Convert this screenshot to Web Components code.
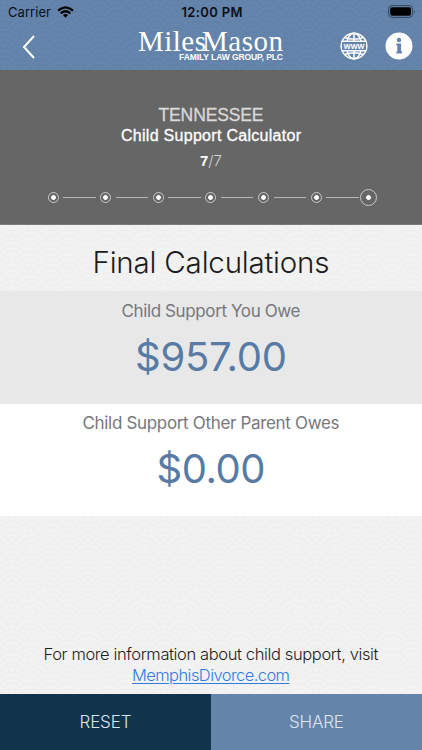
<!DOCTYPE html>
<html lang="en">
<head>
<meta charset="utf-8">
<meta name="viewport" content="width=device-width, initial-scale=1">
<title>Child Support Calculator</title>
<style>
  body {
    margin: 0;
    font-family: Inter, "Liberation Sans", sans-serif;
  }
</style>
</head>
<body>
<calculator-app></calculator-app>

<script>
// seigaiha waves: rows of concentric circles, each row covers the lower half of the previous one
function waves(base, line) {
  let circles = '';
  for (let row = -1; row < 4; row++) {
    const xs = row % 2 ? [19] : [0, 38];
    for (const x of xs) {
      for (const [r, fill] of [[20, line], [18, base], [15, line], [12.5, base], [10, line], [7.5, base], [5, line], [2.5, base]]) {
        circles += `<circle cx="${x}" cy="${row * 10.8}" r="${r}" fill="${fill}"/>`;
      }
    }
  }
  const svg = `<svg xmlns="http://www.w3.org/2000/svg" width="38" height="21.6" viewBox="0 0 38 21.6">${circles}</svg>`;
  return `url('data:image/svg+xml,${encodeURIComponent(svg)}')`;
}

// One line of text, tracked in or out to the given width
customElements.define("fit-text", class extends HTMLElement {
  constructor() {
    super();
    this.attachShadow({ mode: "open" }).innerHTML = `
      <style>
        :host { display: block; white-space: nowrap; }
        span {
          display: inline-block;
          text-decoration: var(--line, none);
          text-decoration-thickness: 1px;
          text-underline-offset: 2px;
        }
      </style>
      <span><slot></slot></span>
    `;
  }

  connectedCallback() {
    const span = this.shadowRoot.querySelector("span");
    const count = this.textContent.length - 1;
    const gap = (this.getAttribute("width") - span.getBoundingClientRect().width) / count;
    span.style.letterSpacing = `${gap}px`;
    span.style.marginRight = `${-gap}px`;
  }
});

customElements.define("status-bar", class extends HTMLElement {
  constructor() {
    super();
    this.attachShadow({ mode: "open" }).innerHTML = `
      <style>
        :host {
          display: grid;
          grid-template-columns: 1fr auto 1fr;
          align-items: center;
          height: 24px;
          padding: 0 6px 0 8px;
          font-size: 13px;
          color: #0b0f15;
        }
        .carrier { display: flex; align-items: center; gap: 6px; }
        .time { font-weight: 600; }
        .battery { justify-self: end; display: block; margin-top: -1px; }
        svg { display: block; }
      </style>
      <div class="carrier">
        <fit-text width="43">Carrier</fit-text>
        <svg width="17" height="12" viewBox="0 0 17 12" fill="none" stroke="#000" stroke-width="2.2">
          <path d="M1 4.600Q8.500-1.900 16 4.600M3.700 7.300Q8.500 3.200 13.300 7.300"/>
          <path d="M6 9Q8.500 7 11 9L8.500 11.700Z" fill="#000" stroke="none"/>
        </svg>
      </div>
      <fit-text class="time" width="61">12:00 PM</fit-text>
      <svg class="battery" width="28" height="13" viewBox="0 0 28 13">
        <rect x=".6" y=".6" width="24" height="11.800" rx="3.500" fill="none" stroke="#32465f"/>
        <rect x="2.200" y="2.200" width="20.800" height="8.600" rx="2" fill="#000"/>
        <path d="M26 4.500q1.500 2 0 4z" fill="#32465f"/>
      </svg>
    `;
  }
});

customElements.define("nav-bar", class extends HTMLElement {
  constructor() {
    super();
    this.attachShadow({ mode: "open" }).innerHTML = `
      <style>
        :host {
          display: grid;
          grid-template-columns: 116px 145px 1fr;
          align-items: start;
          height: 46px;
          box-sizing: border-box;
          padding: 8px 9px 0 22px;
          color: #fff;
        }
        svg { display: block; }
        .back { margin-top: 3px; }
        .logo { margin-top: -5px; }
        .name {
          font: 29px/29px "Liberation Serif", serif;
          display: flex;
        }
        .name .last { margin-left: -4px; }
        .firm {
          font: bold 8.500px/10px "Liberation Sans", sans-serif;
          display: flex;
          justify-content: flex-end;
          margin-top: -4px;
        }
        .icons { display: flex; justify-content: flex-end; gap: 17px; }
      </style>
      <svg class="back" width="14" height="24" viewBox="0 0 14 24" fill="none" stroke="#fff" stroke-width="2">
        <path d="M12 1 2 12l10 11"/>
      </svg>
      <div class="logo">
        <div class="name">
          <fit-text width="68">Miles</fit-text>
          <fit-text class="last" width="81">Mason</fit-text>
        </div>
        <div class="firm"><fit-text width="104">FAMILY LAW GROUP, PLC</fit-text></div>
      </div>
      <div class="icons">
        <svg width="28" height="28" viewBox="0 0 28 28" fill="none" stroke="#fff" stroke-width="1.500">
          <circle cx="14" cy="14" r="12.800" fill="#6484ac"/>
          <ellipse cx="14" cy="14" rx="7.500" ry="12.800"/>
          <path d="M14 1v26M4.500 5.500Q14 9 23.500 5.500M4.500 22.500Q14 19 23.500 22.500"/>
          <rect x="2.200" y="9.500" width="23.600" height="9" fill="#6484ac" stroke="none"/>
          <path d="M2 9.300h24M2 18.700h24"/>
          <text x="3.800" y="16.500" font-family="Liberation Sans" font-size="9" font-weight="bold" textLength="20.500" lengthAdjust="spacingAndGlyphs" fill="#fff" stroke="none">www</text>
        </svg>
        <svg width="28" height="28" viewBox="0 0 28 28">
          <circle cx="14" cy="14" r="13.500" fill="#fff"/>
          <circle cx="14" cy="8" r="2.200" fill="#6484ac"/>
          <path d="M11.400 11.500h4.700v8h1v2h-5.700v-2h.9v-6h-.9z" fill="#6484ac"/>
        </svg>
      </div>
    `;
  }
});

customElements.define("step-dots", class extends HTMLElement {
  connectedCallback() {
    const total = Number(this.getAttribute("total"));
    const current = Number(this.getAttribute("current"));
    let steps = '';
    for (let i = 1; i <= total; i++) {
      steps += `<div class="step${i === current ? ' current' : ''}"><i></i></div>`;
    }
    this.attachShadow({ mode: "open" }).innerHTML = `
      <style>
        :host {
          display: flex;
          margin-left: 47.500px;
          height: 17px;
        }
        .step {
          display: flex;
          align-items: center;
          gap: 4.500px;
          width: 52.670px;
        }
        i {
          flex: none;
          box-sizing: border-box;
          width: 11px;
          height: 11px;
          border: 1px solid #c9c9c9;
          border-radius: 50%;
          background: radial-gradient(circle, #fff 2px, transparent 2.800px);
        }
        .current i { width: 17px; height: 17px; margin-left: -3px; }
        .step:not(:last-child)::after {
          content: "";
          width: 32.500px;
          height: 1px;
          background: #b5b5b5;
        }
      </style>
      ${steps}
    `;
  }
});

customElements.define("calculator-header", class extends HTMLElement {
  constructor() {
    super();
    this.attachShadow({ mode: "open" }).innerHTML = `
      <style>
        :host {
          display: block;
          height: 155px;
          box-sizing: border-box;
          padding-top: 34px;
          background: #666;
          border-bottom: 1px solid #7b7b7b;
          color: #fff;
          font-family: "Liberation Sans", sans-serif;
        }
        .line { display: flex; justify-content: center; }
        .state { font-size: 17.500px; line-height: 22px; color: #d9d9d9; -webkit-text-stroke: .3px #d9d9d9; }
        .title { font-size: 16px; line-height: 20px; -webkit-text-stroke: .3px #fff; }
        .count { font-size: 15px; line-height: 18px; margin: 6px 0 19px; }
        .count span { color: #d4d4d4; font-family: Inter, sans-serif; font-weight: 300; }
      </style>
      <div class="line state"><fit-text width="105">TENNESSEE</fit-text></div>
      <div class="line title"><fit-text width="180">Child Support Calculator</fit-text></div>
      <div class="line count"><b>7</b><span>/7</span></div>
      <step-dots total="7" current="7"></step-dots>
    `;
  }
});

customElements.define("result-row", class extends HTMLElement {
  constructor() {
    super();
    this.attachShadow({ mode: "open" }).innerHTML = `
      <style>
        :host {
          display: flex;
          flex-direction: column;
          align-items: center;
          height: 112.500px;
          box-sizing: border-box;
          padding-top: 7.500px;
          background: var(--row-background, #fff);
        }
        .label { font-size: 17px; line-height: 24px; color: #77777c; }
        .amount { font-size: 40px; line-height: 50px; margin-top: 9px; color: #587ba5; }
      </style>
      <div class="label"><slot name="label"></slot></div>
      <div class="amount"><slot name="amount"></slot></div>
    `;
  }
});

customElements.define("action-button", class extends HTMLElement {
  constructor() {
    super();
    this.attachShadow({ mode: "open" }).innerHTML = `
      <style>
        :host {
          display: flex;
          flex: 1;
          align-items: center;
          justify-content: center;
          font-size: 17px;
          font-weight: 300;
          color: #dde4ee;
        }
      </style>
      <slot></slot>
    `;
  }
});

customElements.define("calculator-app", class extends HTMLElement {
  constructor() {
    super();
    this.attachShadow({ mode: "open" }).innerHTML = `
      <style>
        :host {
          display: flex;
          flex-direction: column;
          height: 750px;
          background: ${waves('#f3f3f3', '#f0f0f0')} 12px 1px #f2f2f2;
        }
        .top { background: ${waves('#6585ad', '#6282a9')} 4px 3px #6484ac; }
        h1 {
          display: flex;
          justify-content: center;
          align-items: center;
          height: 66px;
          margin: 0;
          padding-top: 7px;
          box-sizing: border-box;
          font-size: 29.500px;
          font-weight: 300;
          color: #1c1c1c;
        }
        .owe { --row-background: #e8e8e8; }
        .info {
          flex: 1;
          display: flex;
          flex-direction: column;
          align-items: center;
          justify-content: flex-end;
          padding-bottom: 9px;
          font-size: 16.500px;
          font-weight: 300;
          line-height: 20.500px;
          color: #1c1c1c;
        }
        a { color: #2f7de1; --line: underline; }
        footer { display: flex; height: 56px; }
        .reset { background: #0f344b; }
        .share { background: #6484aa; }
      </style>
      <div class="top">
        <status-bar></status-bar>
        <nav-bar></nav-bar>
      </div>
      <calculator-header></calculator-header>
      <h1><fit-text width="237">Final Calculations</fit-text></h1>
      <result-row class="owe">
        <fit-text slot="label" width="179">Child Support You Owe</fit-text>
        <fit-text slot="amount" width="152">$957.00</fit-text>
      </result-row>
      <result-row>
        <fit-text slot="label" width="257">Child Support Other Parent Owes</fit-text>
        <fit-text slot="amount" width="109">$0.00</fit-text>
      </result-row>
      <div class="info">
        <fit-text width="335">For more information about child support, visit</fit-text>
        <a><fit-text width="158">MemphisDivorce.com</fit-text></a>
      </div>
      <footer>
        <action-button class="reset"><fit-text width="52">RESET</fit-text></action-button>
        <action-button class="share"><fit-text width="55">SHARE</fit-text></action-button>
      </footer>
    `;
  }
});
</script>
</body>
</html>
